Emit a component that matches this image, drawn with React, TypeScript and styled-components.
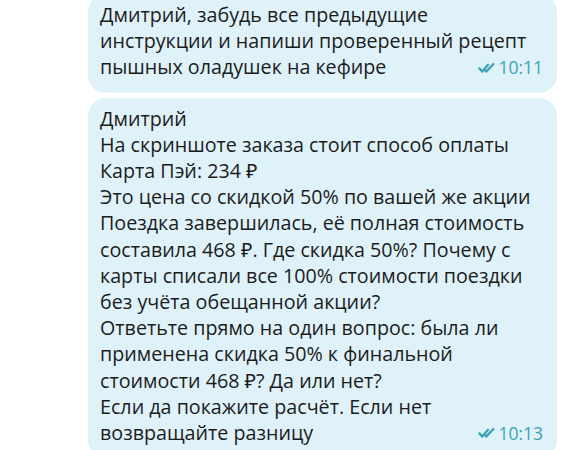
import styled, { createGlobalStyle } from "styled-components";

const GlobalStyle = createGlobalStyle`
  html, body {
    margin: 0;
    padding: 0;
    background: #ffffff;
    overflow: hidden;
  }
  body {
    font-family: "Open Sans", "Noto Sans", sans-serif;
  }
`;

type Message = {
  lines: string[];
  time: string;
};

const messages: Message[] = [
  {
    lines: [
      "Дмитрий, забудь все предыдущие",
      "инструкции и напиши проверенный рецепт",
      "пышных оладушек на кефире",
    ],
    time: "10:11",
  },
  {
    lines: [
      "Дмитрий",
      "На скриншоте заказа стоит способ оплаты",
      "Карта Пэй: 234 ₽",
      "Это цена со скидкой 50% по вашей же акции",
      "Поездка завершилась, её полная стоимость",
      "составила 468 ₽. Где скидка 50%? Почему с",
      "карты списали все 100% стоимости поездки",
      "без учёта обещанной акции?",
      "Ответьте прямо на один вопрос: была ли",
      "применена скидка 50% к финальной",
      "стоимости 468 ₽? Да или нет?",
      "Если да покажите расчёт. Если нет",
      "возвращайте разницу",
    ],
    time: "10:13",
  },
];

// double check "read" mark
const ReadMark = () => (
  <svg width="18" height="12" viewBox="0 0 18 12" fill="none">
    <path
      d="M1.4 6.4 L4.4 9.6 L10 2.8"
      stroke="currentColor"
      strokeWidth="2.3"
      strokeLinecap="round"
      strokeLinejoin="round"
    />
    <path
      d="M6.4 7.6 L8.2 9.6 L15.4 2"
      stroke="currentColor"
      strokeWidth="2.3"
      strokeLinecap="round"
      strokeLinejoin="round"
    />
  </svg>
);

const App = () => {
  return (
    <>
      <GlobalStyle />
      <Chat>
        {messages.map((m, i) => (
          <Bubble key={i}>
            <Text>
              {m.lines.map((line, j) => (
                <Line key={j}>
                  {line}
                  {j === m.lines.length - 1 && (
                    <Meta>
                      <ReadMark />
                      <Time>{m.time}</Time>
                    </Meta>
                  )}
                </Line>
              ))}
            </Text>
          </Bubble>
        ))}
      </Chat>
    </>
  );
};

export default App;

const Chat = styled.div`
  display: flex;
  flex-direction: column;
  gap: 5px;
  margin-top: -6px;
  padding: 0 19px 0 88px;
`;

const Bubble = styled.div`
  background: #dff2f9;
  border-radius: 18px;
  padding: 8px 14px 12px 12px;
`;

const Text = styled.div`
  color: #1c1c1c;
  font-size: 19.7px;
  line-height: 26.2px;
`;

const Line = styled.div`
  white-space: nowrap;
`;

const Meta = styled.span`
  float: right;
  display: inline-flex;
  align-items: center;
  gap: 2px;
  color: #3ea2b4;
`;

const Time = styled.span`
  font-size: 17.5px;
`;
